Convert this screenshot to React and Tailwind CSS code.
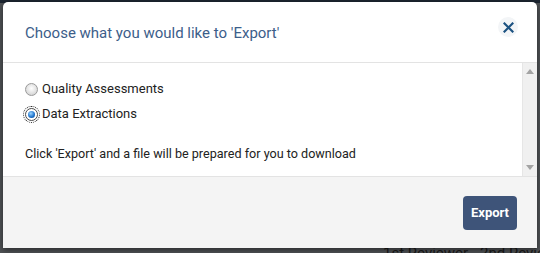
import React, { useState } from 'react';

function Radio({ checked }) {
  if (checked) {
    return (
      <span className="relative inline-flex w-[13px] h-[13px] items-center justify-center rounded-full border border-[#4a4a4a] bg-white outline-1 outline-dotted outline-offset-1 outline-[#222]">
        <span className="w-[7px] h-[7px] rounded-full bg-[radial-gradient(circle_at_40%_35%,#9ad4ff,#1a6fc9_60%,#0b3f80)]" />
      </span>
    );
  }
  return (
    <span className="inline-block w-[13px] h-[13px] rounded-full border border-[#9a9a9a] bg-[radial-gradient(circle_at_50%_40%,#ffffff,#e2e2e2_55%,#c8c8c8)]" />
  );
}

export default function App() {
  const [choice, setChoice] = useState('data');

  const options = [
    { id: 'quality', label: 'Quality Assessments' },
    { id: 'data', label: 'Data Extractions' }
  ];

  return (
    <div className="relative w-[540px] h-[253px] overflow-hidden bg-[#505356] font-['Roboto',sans-serif]">
      {/* Page behind the backdrop */}
      <div className="h-[3px] bg-[#1c2530]" />
      <div className="absolute left-[383px] top-[243px] text-[15px] leading-[20px] text-[#1a1a1a]">1st Reviewer</div>
      <div className="absolute left-[480px] top-[243px] text-[15px] leading-[20px] text-[#1a1a1a] whitespace-nowrap">2nd Reviewer</div>

      {/* Modal */}
      <div className="absolute left-[3px] top-[2px] w-[534px] h-[246px] flex flex-col bg-white rounded-t-[5px] shadow-[0_2px_6px_rgba(0,0,0,0.5)]">
        <div className="h-[61px] flex items-center justify-between pl-[22px] pr-[19px] border-b border-[#e3e3e3]">
          <h4 className="text-[15px] text-[#3c5e8a] pt-[2px]">Choose what you would like to 'Export'</h4>
          <button className="w-[20px] h-[20px] flex items-center justify-center rounded-full bg-[#f3f5f7] -mt-[10px]">
            <svg width="11" height="11" viewBox="0 0 11 11">
              <path d="M1.5 1.5 L9.5 9.5 M9.5 1.5 L1.5 9.5" stroke="#1c5281" strokeWidth="2.2" strokeLinecap="square" />
            </svg>
          </button>
        </div>

        <div className="h-[114px] flex border-b border-[#e3e3e3]">
          <div className="flex-1 pl-[22px] pt-[17px] text-[13px] text-[#222]">
            <div className="flex flex-col gap-[7px]">
              {options.map((o) => (
                <label key={o.id} className="flex items-center gap-[4px] leading-[18px]" onClick={() => setChoice(o.id)}>
                  <Radio checked={choice === o.id} />
                  <span>{o.label}</span>
                </label>
              ))}
            </div>
            <p className="mt-[22px] text-[12.6px] leading-[18px]">Click 'Export' and a file will be prepared for you to download</p>
          </div>
          <div className="w-[15px] bg-[#f0f0f0] border-l border-[#e6e6e6] flex flex-col items-center justify-between py-[6px]">
            <svg width="8" height="5" viewBox="0 0 8 5"><path d="M0 5 L4 0 L8 5 Z" fill="#a3a3a3" /></svg>
            <svg width="8" height="5" viewBox="0 0 8 5"><path d="M0 0 L4 5 L8 0 Z" fill="#a3a3a3" /></svg>
          </div>
        </div>

        <div className="flex-1 bg-[#f4f4f4] flex items-start justify-end pt-[19px] pr-[20px]">
          <button className="w-[54px] h-[34px] rounded-[4px] bg-[#3e5479] text-white text-[13px] font-bold font-['Roboto',sans-serif]">
            Export
          </button>
        </div>
      </div>
    </div>
  );
}
